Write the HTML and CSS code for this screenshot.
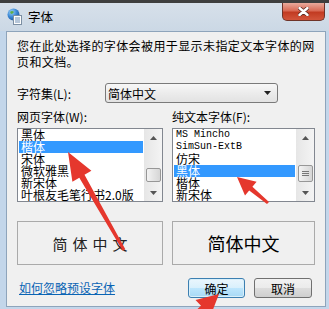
FILE: index.html
```html
<!DOCTYPE html>
<html lang="zh-CN">
<head>
  <meta charset="UTF-8" />
  <title>字体</title>
  <link rel="stylesheet" href="styles.css">
</head>
<body>

<div class="window">
  <div class="titlebar">
    <svg class="app-icon" width="15" height="17" viewBox="0 0 15 17">
      <defs>
        <radialGradient id="globe" cx="0.35" cy="0.3" r="0.8">
          <stop offset="0" stop-color="#9fd0f5" />
          <stop offset="0.5" stop-color="#3d8ad6" />
          <stop offset="1" stop-color="#1b4f96" />
        </radialGradient>
      </defs>
      <circle cx="6.5" cy="6.5" r="6" fill="url(#globe)" />
      <path d="M3 4 Q5 2 7 4 Q6 6 4 6 Z" fill="#5fae4a" />
      <rect x="6.5" y="7.5" width="8" height="9" fill="#fdfdfd" stroke="#7c8fa3" />
      <path d="M8 10h5M8 12h5M8 14h5" stroke="#6f8fb5" stroke-width="1" />
    </svg>
    <span class="title">字体</span>
    <div class="close">
      <svg width="11" height="9" viewBox="0 0 11 9">
        <path d="M1.5 1L9.5 8M9.5 1L1.5 8" stroke="#5a2a22" stroke-width="4" stroke-linecap="round" />
        <path d="M1.5 1L9.5 8M9.5 1L1.5 8" stroke="#fff" stroke-width="2.4" stroke-linecap="round" />
      </svg>
    </div>
  </div>

  <div class="client">
    <p class="intro">您在此处选择的字体会被用于显示未指定文本字体的网<br>页和文档。</p>

    <div class="charset-row">
      <span class="field-label">字符集(L):</span>
      <div class="combo">
        <span>简体中文</span>
        <svg width="7" height="4" viewBox="0 0 7 4"><path d="M0 0h7L3.5 4z" fill="#222" /></svg>
      </div>
    </div>

    <div class="fonts">
      <div class="col">
        <div class="col-label">网页字体(W):</div>
        <div class="listbox">
          <ul>
            <li>黑体</li>
            <li class="sel">楷体</li>
            <li>宋体</li>
            <li>微软雅黑</li>
            <li>新宋体</li>
            <li>叶根友毛笔行书2.0版</li>
          </ul>
          <div class="scroll">
            <div class="arrow"><svg width="7" height="4" viewBox="0 0 7 4"><path d="M0 4h7L3.5 0z" fill="#555" /></svg></div>
            <div class="track"><div class="thumb thumb-left"></div></div>
            <div class="arrow"><svg width="7" height="4" viewBox="0 0 7 4"><path d="M0 0h7L3.5 4z" fill="#555" /></svg></div>
          </div>
        </div>
        <div class="preview preview-serif">简体中文</div>
      </div>

      <div class="col">
        <div class="col-label">纯文本字体(F):</div>
        <div class="listbox">
          <ul>
            <li class="latin">MS Mincho</li>
            <li class="latin">SimSun-ExtB</li>
            <li>仿宋</li>
            <li class="sel">黑体</li>
            <li>楷体</li>
            <li>新宋体</li>
          </ul>
          <div class="scroll">
            <div class="arrow"><svg width="7" height="4" viewBox="0 0 7 4"><path d="M0 4h7L3.5 0z" fill="#555" /></svg></div>
            <div class="track">
              <div class="thumb thumb-right">
                <svg width="7" height="6" viewBox="0 0 7 6"><path d="M0 .5h7M0 2.5h7M0 4.5h7" stroke="#777" /></svg>
              </div>
            </div>
            <div class="arrow"><svg width="7" height="4" viewBox="0 0 7 4"><path d="M0 0h7L3.5 4z" fill="#555" /></svg></div>
          </div>
        </div>
        <div class="preview preview-sans">简体中文</div>
      </div>
    </div>

    <div class="footer">
      <a href="#" class="help-link">如何忽略预设字体</a>
      <div class="buttons">
        <button class="btn btn-default">确定</button>
        <button class="btn">取消</button>
      </div>
    </div>
  </div>
</div>

<svg class="arrows" width="329" height="309" viewBox="0 0 329 309">
  <polygon points="68,152 91.4,170.8 84.5,174.8 125.3,249.3 122.7,250.7 79.3,177.8 72.4,181.8" />
  <polygon points="237,177 256.6,181.7 252.4,186.7 269,201.9 267,204.1 249.2,190.5 245,195.5" />
  <polygon points="219,294 210.5,316 205,310.2 183,330 179,326 201,305.8 195.5,300" />
</svg>

</body>
</html>
```

FILE: styles.css
```css
body {
  margin: 0;
  width: 329px;
  height: 309px;
  overflow: hidden;
  position: relative;
  background: #c3d6ea;
  font-family: "Noto Sans CJK SC", sans-serif;
  font-size: 12px;
  color: #000;
}
.titlebar {
  height: 28px;
  border-top: 3px solid #3f3f3f;
  background: linear-gradient(#d7e0ea, #cbd8e5);
  display: flex;
  align-items: flex-start;
}
.app-icon {
  margin: 5px 0 0 7px;
}
.title {
  margin: 6px 0 0 6px;
  line-height: 16px;
  font-size: 12.5px;
}
.close {
  margin-left: auto;
  margin-right: 4px;
  width: 43px;
  height: 18px;
  box-sizing: border-box;
  border: 1px solid #6e3328;
  border-top: none;
  border-radius: 0 0 5px 5px;
  background: linear-gradient(#e9aa9c, #d96a55 45%, #c23b22 55%, #d2553b);
  display: flex;
  align-items: center;
  justify-content: center;
}
.client {
  margin: 0 3px 0 6px;
  border: 1px solid #8ea4bb;
  background: #f0f0f0;
  padding: 6px 10px 8px;
}
.intro {
  margin: 0;
  line-height: 16px;
  letter-spacing: 0.4px;
  white-space: nowrap;
}
.charset-row {
  margin-top: 13px;
  display: flex;
  align-items: center;
}
.field-label {
  width: 88px;
}
.combo {
  width: 173px;
  height: 20px;
  box-sizing: border-box;
  border: 1px solid #7a7a7a;
  border-radius: 3px;
  background: linear-gradient(#f7f7f7, #ececec 50%, #e2e2e2);
  display: flex;
  align-items: center;
  justify-content: space-between;
  padding: 0 6px 0 2px;
}
.fonts {
  margin-top: 6px;
  display: grid;
  grid-template-columns: 146px 143px;
  column-gap: 9px;
}
.col-label {
  line-height: 16px;
  height: 16px;
}
.listbox {
  margin-top: 3px;
  height: 74px;
  box-sizing: border-box;
  border: 1px solid #828790;
  background: #fff;
  display: flex;
}
.listbox ul {
  flex: 1;
  list-style: none;
  margin: 0;
  padding: 0 1px;
  overflow: hidden;
}
.listbox li {
  height: 12px;
  line-height: 12px;
  padding-left: 2px;
  white-space: nowrap;
}
.listbox li.latin {
  font-family: "Liberation Mono", monospace;
  font-size: 10px;
}
.listbox li.sel {
  background: #3399ff;
  color: #fff;
}
.scroll {
  width: 18px;
  background: linear-gradient(90deg, #e6e6e6, #f4f4f4);
  display: flex;
  flex-direction: column;
  align-items: center;
}
.arrow {
  height: 17px;
  display: flex;
  align-items: center;
  justify-content: center;
}
.track {
  flex: 1;
}
.thumb {
  width: 15px;
  box-sizing: border-box;
  border: 1px solid #979797;
  border-radius: 2px;
  background: linear-gradient(90deg, #f3f3f3, #e4e4e4 50%, #d6d6d6);
  display: flex;
  align-items: center;
  justify-content: center;
}
.thumb-left {
  margin-top: 22px;
  height: 14px;
}
.thumb-right {
  margin-top: 19px;
  height: 17px;
}
.preview {
  margin-top: 19px;
  height: 44px;
  box-sizing: border-box;
  border: 1px solid #aaaaaa;
  display: flex;
  align-items: center;
  justify-content: center;
}
.preview-serif {
  font-size: 15px;
  letter-spacing: 5px;
  padding-left: 5px;
  color: #222;
}
.preview-sans {
  font-size: 18px;
}
.footer {
  margin-top: 13px;
  height: 20px;
  display: flex;
  align-items: center;
  justify-content: space-between;
}
.help-link {
  padding-left: 2px;
  color: #0a64b4;
  line-height: 16px;
}
.buttons {
  display: flex;
  gap: 9px;
  margin-right: 3px;
}
.btn {
  width: 58px;
  height: 20px;
  padding: 0;
  border: 1px solid #707070;
  border-radius: 3px;
  background: linear-gradient(#f2f2f2, #ebebeb 50%, #dddddd 50%, #cfcfcf);
  font-family: inherit;
  font-size: 12px;
  color: #000;
}
.btn-default {
  width: 57px;
  border-color: #3c7fb1;
  background: linear-gradient(#eaf6fd, #d9f0fc 50%, #bee6fd 50%, #a7d9f5);
  box-shadow: inset 0 0 0 1px #d8effa;
}
.arrows {
  position: absolute;
  top: 0;
  left: 0;
  pointer-events: none;
}
.arrows polygon {
  fill: #e5372d;
}
```
